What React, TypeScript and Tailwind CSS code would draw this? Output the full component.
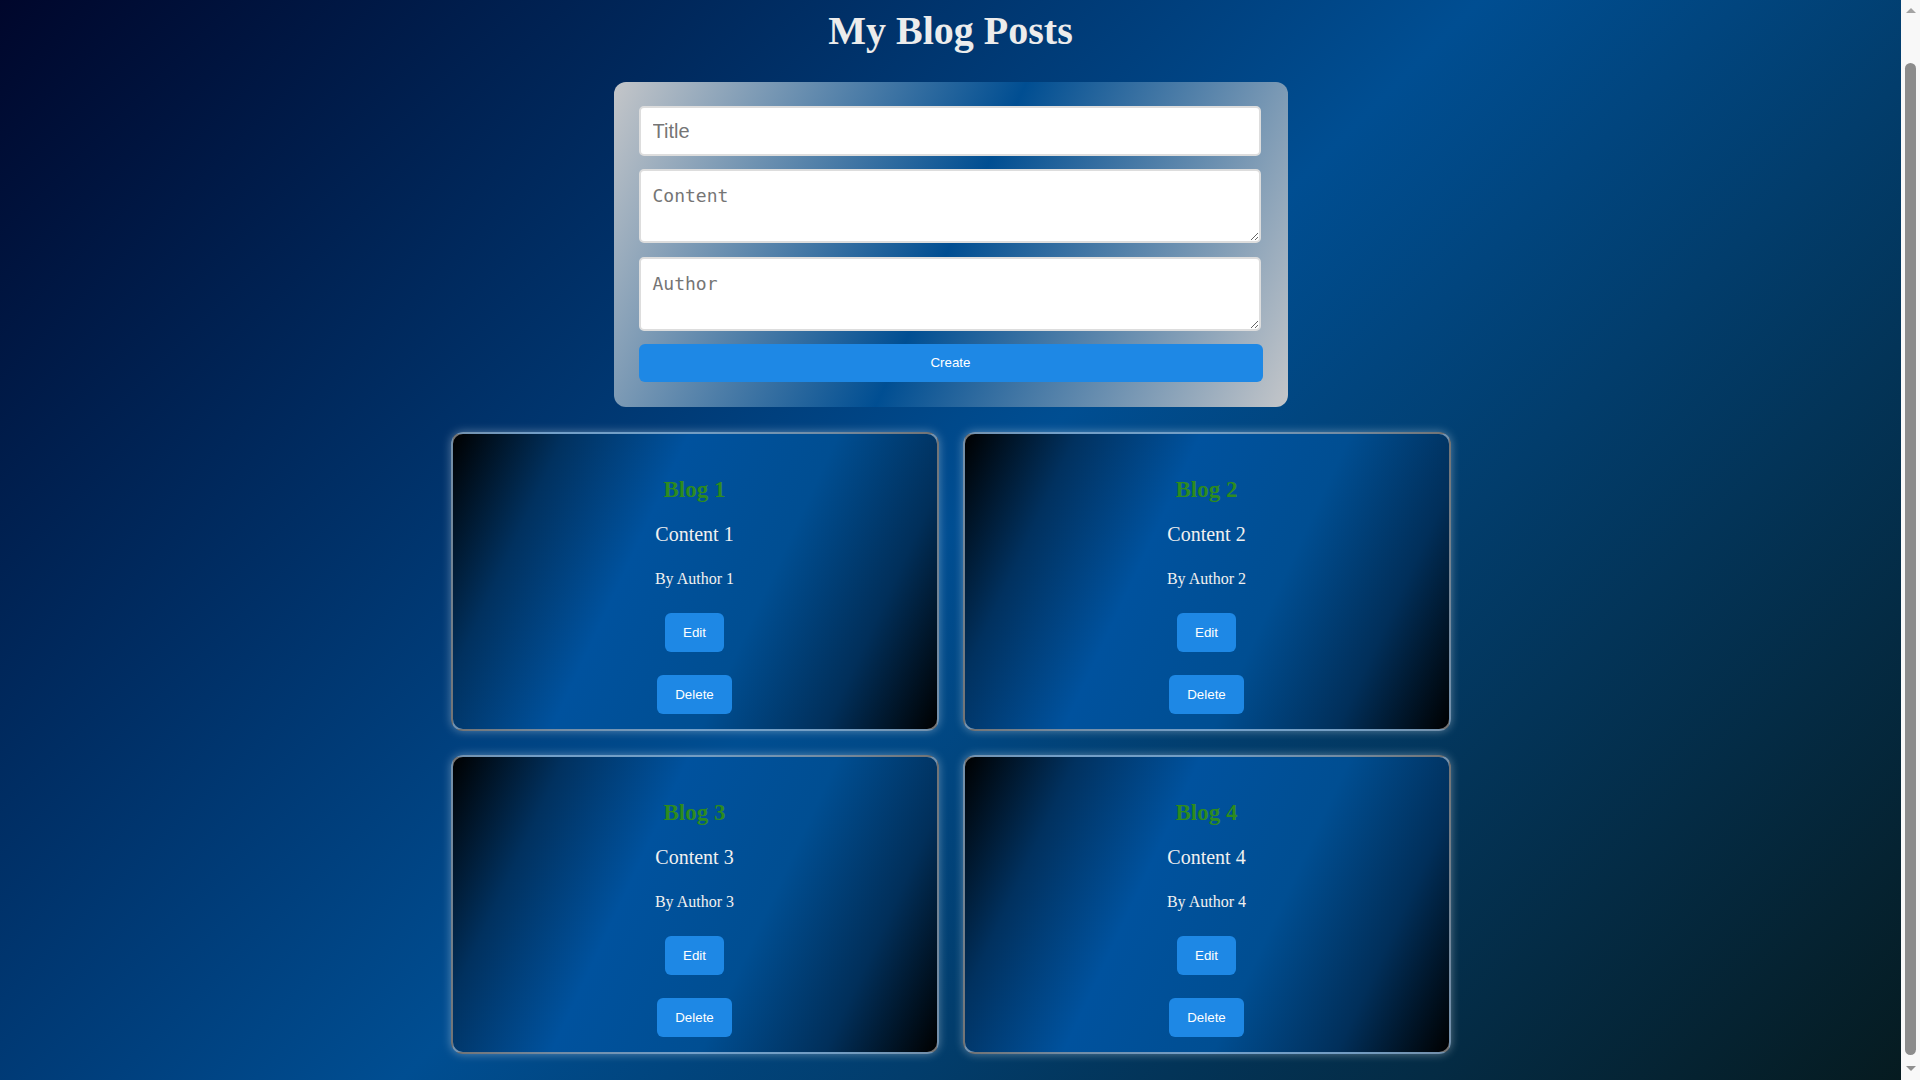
import React, { useEffect } from 'react';

const posts = [
  { title: 'Blog 1', content: 'Content 1', author: 'Author 1' },
  { title: 'Blog 2', content: 'Content 2', author: 'Author 2' },
  { title: 'Blog 3', content: 'Content 3', author: 'Author 3' },
  { title: 'Blog 4', content: 'Content 4', author: 'Author 4' },
];

const serif = "font-['Liberation_Serif','Times_New_Roman',serif]";
const sans = "font-['Liberation_Sans',Arial,sans-serif]";

const BlogCard = ({ post }: { post: (typeof posts)[number] }) => (
  <div className="flex flex-col items-center rounded-[12px] border-2 border-white/45 bg-[linear-gradient(115deg,#000000_0%,#01315f_18%,#00529e_38%,#004e92_62%,#012f5a_82%,#000000_100%)] pt-[42px] pb-[15px] shadow-[0_0_10px_rgba(255,255,255,0.35)]">
    <h3 className={`${serif} text-[23px] leading-[27px] font-bold text-[#2e8b1e]`}>{post.title}</h3>
    <p className={`${serif} mt-[20px] text-[20px] leading-[23px] text-[#f0f0f0]`}>{post.content}</p>
    <p className={`${serif} mt-[24px] text-[16px] leading-[18px] text-[#f0f0f0]`}>By {post.author}</p>
    <button className={`${sans} mt-[25px] h-[39px] rounded-[6px] bg-[#1e88e5] px-[18px] text-[13.33px] text-white`}>Edit</button>
    <button className={`${sans} mt-[23px] h-[39px] rounded-[6px] bg-[#1e88e5] px-[18px] text-[13.33px] text-white`}>Delete</button>
  </div>
);

// classic browser scrollbar as it shows in the shot
const ScrollBar = () => (
  <div className="fixed top-0 right-0 flex h-screen w-[19px] flex-col items-center bg-[#f8f8f8]">
    <div className="mt-[8px] h-0 w-0 border-x-[5px] border-b-[5px] border-x-transparent border-b-[#a3a3a3]" />
    <div className="mt-[50px] h-[992px] w-[11px] rounded-full bg-[#8c8c8c]" />
    <div className="mt-[11px] h-0 w-0 border-x-[5px] border-t-[5px] border-x-transparent border-t-[#8f8f8f]" />
  </div>
);

export default function App() {
  // the reference is shot a little way down the page
  useEffect(() => {
    window.scrollTo(0, 50);
  }, []);

  return (
    <div className="flex min-h-[1139px] flex-col items-center bg-[linear-gradient(135deg,#000428_0%,#004e92_50%,#061a1e_100%)] pt-[58px] pr-[19px] pb-[34px]">
      <h1 className={`${serif} h-[46px] text-[40px] leading-[46px] font-bold text-[#ececec]`}>My Blog Posts</h1>

      <form
        className="mt-[28px] flex w-[674px] flex-col rounded-[12px] bg-[linear-gradient(115deg,#c4c6c9_0%,#004e92_50%,#c4c6c9_100%)] px-[25px] pt-[24px] pb-[25px]"
        onSubmit={(e) => e.preventDefault()}
      >
        <input
          placeholder="Title"
          className={`${sans} h-[50px] w-[622px] rounded-[5px] border-2 border-[#dddddd] bg-white px-[12px] text-[20px] text-[#222] placeholder:text-[#757575] outline-none`}
        />
        <textarea
          placeholder="Content"
          className="mt-[13px] h-[74px] w-[622px] rounded-[5px] border-2 border-[#dddddd] bg-white px-[12px] pt-[14px] font-['DejaVu_Sans_Mono',monospace] text-[18px] leading-[21px] text-[#222] placeholder:text-[#757575] outline-none"
        />
        <textarea
          placeholder="Author"
          className="mt-[14px] h-[74px] w-[622px] rounded-[5px] border-2 border-[#dddddd] bg-white px-[12px] pt-[14px] font-['DejaVu_Sans_Mono',monospace] text-[18px] leading-[21px] text-[#222] placeholder:text-[#757575] outline-none"
        />
        <button
          type="submit"
          className={`${sans} mt-[13px] h-[38px] w-full rounded-[6px] bg-[#1e88e5] text-[13.33px] text-white`}
        >
          Create
        </button>
      </form>

      <div className="mt-[25px] grid w-[1000px] grid-cols-2 gap-[24px]">
        {posts.map((post) => (
          <BlogCard key={post.title} post={post} />
        ))}
      </div>

      <ScrollBar />
    </div>
  );
}
